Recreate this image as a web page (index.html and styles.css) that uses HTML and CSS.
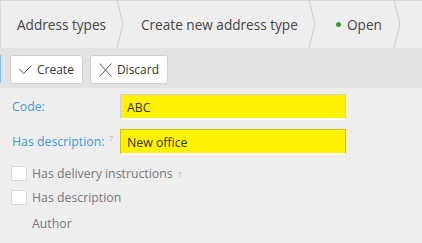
FILE: index.html
```html
<!DOCTYPE html>
<html lang="en">
<head>
<meta name="viewport" content="width=device-width, initial-scale=1">
<title>Create new address type</title>
<link rel="stylesheet" href="styles.css">
</head>
<body>

<div class="page">
    <div class="crumbs">
        <div class="crumb first">Address types</div>
        <div class="crumb second">Create new address type</div>
        <div class="crumb state"><span class="dot"></span>Open</div>
        <div class="crumb rest"></div>
    </div>

    <div class="toolbar">
        <button class="tbBtn">
            <svg width="13" height="10" viewBox="0 0 13 10"><path d="M0.5 4 L4.5 8.5 L12.5 0.5" fill="none" stroke="#555" stroke-width="1"/></svg>
            Create
        </button>
        <button class="tbBtn">
            <svg width="13" height="14" viewBox="0 0 13 14"><path d="M0.5 0.5 L12.5 13.5 M12.5 0.5 L0.5 13.5" fill="none" stroke="#555" stroke-width="1"/></svg>
            Discard
        </button>
    </div>

    <div class="form">
        <div class="row">
            <label class="lbl">Code:</label>
            <div class="field">ABC</div>
        </div>
        <div class="row">
            <label class="lbl">Has description:<sup class="help">?</sup></label>
            <div class="field focus">New office</div>
        </div>
        <div class="checks">
            <div class="check">
                <span class="box"></span>Has delivery instructions<sup class="help">?</sup>
            </div>
            <div class="check">
                <span class="box"></span>Has description
            </div>
        </div>
        <div class="plain">Author</div>
    </div>
</div>

</body>
</html>
```

FILE: styles.css
```css
* {
    box-sizing: border-box;
}

body {
    margin: 0;
    font-family: 'Open Sans', 'Noto Sans', sans-serif;
    background: #eeeeee;
    color: #444;
}

.page {
    width: 422px;
    height: 243px;
    overflow: hidden;
}

.crumbs {
    display: flex;
    height: 48px;
    border-top: 1px solid #d9d9d9;
    border-left: 1px solid #d9d9d9;
    background: #eeeeee;
}

.crumb {
    position: relative;
    display: flex;
    align-items: center;
    flex: none;
    font-size: 13.6px;
    color: #444;
    white-space: nowrap;
}

.crumb.first {
    padding-left: 16px;
    width: 123px;
}

.crumb.second {
    padding-left: 17px;
    width: 192px;
}

.crumb.state {
    padding-left: 20px;
    width: 85px;
}

.crumb.rest {
    flex: 1;
}

.crumb::after {
    content: '';
    position: absolute;
    right: 0;
    top: -1px;
    width: 8px;
    height: 48px;
    background: url("data:image/svg+xml;utf8,<svg xmlns='http://www.w3.org/2000/svg' width='8' height='48'><path d='M1 0 L7 24 L1 48' fill='none' stroke='%23d2d2d2' stroke-width='1.2'/></svg>");
}

.crumb.rest::after {
    display: none;
}

.dot {
    display: inline-block;
    width: 5px;
    height: 5px;
    border-radius: 50%;
    background: #2ea03a;
    margin-right: 6px;
}

.toolbar {
    position: relative;
    display: flex;
    gap: 7px;
    height: 40px;
    padding: 7px 0 0 10px;
    background: #e2e2e2;
}

.toolbar::before {
    content: '';
    position: absolute;
    left: 0;
    top: 7px;
    width: 1px;
    height: 28px;
    background: #7cc0e8;
}

.tbBtn {
    display: flex;
    align-items: center;
    gap: 5px;
    height: 29px;
    padding: 0 8px;
    background: #fff;
    border: 1px solid #d0d0d0;
    border-radius: 3px;
    font-family: inherit;
    font-size: 12px;
    color: #333;
}

.form {
    padding: 1px 0 0 12px;
}

.row {
    display: flex;
    align-items: center;
    height: 35px;
}

.lbl {
    width: 108px;
    font-size: 12.3px;
    color: #3d9ad6;
}

.help {
    margin-left: 5px;
    font-size: 8px;
    color: #b8a4d8;
}

.field {
    display: flex;
    align-items: center;
    width: 226px;
    height: 26px;
    padding: 2px 6px 0;
    background: #fff200;
    border: 1px solid #d2d2d2;
    border-bottom: 2px solid #fff;
    font-size: 12.3px;
    color: #333;
}

.field.focus {
    border-color: #cfc600;
    border-bottom: 2px solid #fff;
}

.checks {
    padding-top: 2px;
}

.check {
    display: flex;
    align-items: center;
    height: 24px;
    margin-left: -1px;
    font-size: 12.3px;
    color: #777;
}

.box {
    width: 16px;
    height: 15px;
    background: #fff;
    border: 1px solid #d8d8d8;
    border-radius: 2px;
    margin-right: 5px;
}

.plain {
    padding: 6px 0 0 20px;
    font-size: 12.3px;
    color: #777;
}
```
